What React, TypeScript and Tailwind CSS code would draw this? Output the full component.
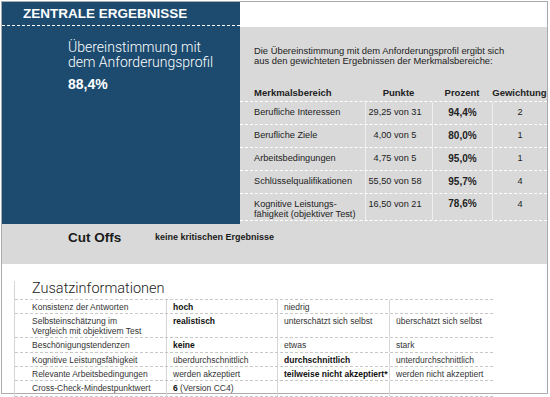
import React from "react";

type ScoreRow = { name: string[]; points: string; percent: string; weight: string };

const scoreRows: ScoreRow[] = [
  { name: ["Berufliche Interessen"], points: "29,25 von 31", percent: "94,4%", weight: "2" },
  { name: ["Berufliche Ziele"], points: "4,00 von 5", percent: "80,0%", weight: "1" },
  { name: ["Arbeitsbedingungen"], points: "4,75 von 5", percent: "95,0%", weight: "1" },
  { name: ["Schlüsselqualifikationen"], points: "55,50 von 58", percent: "95,7%", weight: "4" },
  {
    name: ["Kognitive Leistungs-", "fähigkeit (objektiver Test)"],
    points: "16,50 von 21",
    percent: "78,6%",
    weight: "4",
  },
];

type Cell = { text: string; bold?: boolean };
type InfoRow = { label: string[]; cells: Cell[][]; h: string };

const infoRows: InfoRow[] = [
  {
    label: ["Konsistenz der Antworten"],
    cells: [[{ text: "hoch", bold: true }], [{ text: "niedrig" }], []],
    h: "h-[14px]",
  },
  {
    label: ["Selbsteinschätzung im", "Vergleich mit objektivem Test"],
    cells: [
      [{ text: "realistisch", bold: true }],
      [{ text: "unterschätzt sich selbst" }],
      [{ text: "überschätzt sich selbst" }],
    ],
    h: "h-[24px]",
  },
  {
    label: ["Beschönigungstendenzen"],
    cells: [[{ text: "keine", bold: true }], [{ text: "etwas" }], [{ text: "stark" }]],
    h: "h-[15px]",
  },
  {
    label: ["Kognitive Leistungsfähigkeit"],
    cells: [
      [{ text: "überdurchschnittlich" }],
      [{ text: "durchschnittlich", bold: true }],
      [{ text: "unterdurchschnittlich" }],
    ],
    h: "h-[14px]",
  },
  {
    label: ["Relevante Arbeitsbedingungen"],
    cells: [
      [{ text: "werden akzeptiert" }],
      [{ text: "teilweise nicht akzeptiert*", bold: true }],
      [{ text: "werden nicht akzeptiert" }],
    ],
    h: "h-[14px]",
  },
  {
    label: ["Cross-Check-Mindestpunktwert"],
    cells: [[{ text: "6", bold: true }, { text: " (Version CC4)" }], [], []],
    h: "h-[16px]",
  },
];

function ScoreTable() {
  return (
    <div className="mt-[14px] text-[#222]">
      <div className="flex h-[22px] border-b border-dashed border-white text-[9.5px] font-bold leading-[11px]">
        <div className="w-[125px] pl-[14px] pt-[7px]">Merkmalsbereich</div>
        <div className="w-[67px] pt-[7px] text-center">Punkte</div>
        <div className="w-[60px] pt-[7px] text-center">Prozent</div>
        <div className="flex-1 pt-[7px] text-center">Gewichtung</div>
      </div>
      {scoreRows.map((r) => (
        <div
          key={r.points + r.percent}
          className={`flex border-b border-dashed border-white text-[9.2px] ${
            r.name.length > 1 ? "h-[27px] leading-[10px]" : "h-[23px] leading-[11px]"
          }`}
        >
          <div className="w-[125px] pl-[14px] pt-[5px]">
            {r.name.map((n) => (
              <div key={n}>{n}</div>
            ))}
          </div>
          <div className="w-[67px] border-l border-[#efefef] pt-[5px] pr-[8px] text-center">{r.points}</div>
          <div className="w-[60px] border-l border-[#efefef] pt-[5px] text-center text-[10px] font-bold">
            {r.percent}
          </div>
          <div className="flex-1 border-l border-[#efefef] pt-[5px] text-center">{r.weight}</div>
        </div>
      ))}
    </div>
  );
}

function InfoTable() {
  return (
    <div className="ml-[12px] w-[479px] border-l border-[#d6d6d6] text-[8.5px] leading-[10px] text-[#333]">
      <div className="h-[19px] border-b border-dashed border-[#c8c8c8] pl-[17px] font-['Roboto',Arial,sans-serif] text-[14.5px] font-light leading-[16px] text-[#222]">
        Zusatzinformationen
      </div>
      {infoRows.map((r) => (
        <div key={r.label[0]} className={`flex shrink-0 ${r.h} border-b border-dashed border-[#c8c8c8]`}>
          <div className="w-[151px] pl-[17px] pt-[2px]">
            {r.label.map((l) => (
              <div key={l}>{l}</div>
            ))}
          </div>
          {r.cells.map((c, i) => (
            <div
              key={i}
              className={`border-l border-[#d6d6d6] pl-[6px] pt-[2px] ${
                i === 0 ? "w-[111px]" : i === 1 ? "w-[112px]" : "flex-1"
              }`}
            >
              {c.map((part) => (
                <span key={part.text} className={part.bold ? "font-bold text-[#111]" : ""}>
                  {part.text}
                </span>
              ))}
            </div>
          ))}
        </div>
      ))}
    </div>
  );
}

export default function App() {
  return (
    <div className="h-[397px] w-[550px] overflow-hidden bg-white pl-px pt-px font-['Liberation_Sans',Arial,sans-serif]">
      <div className="flex h-[393px] w-[547px] flex-col border border-[#ababab]">
        <div className="flex h-[222px] shrink-0">
          {/* blue summary panel */}
          <div className="flex w-[238px] flex-col bg-[#1c4b6f] text-white">
            <div className="flex h-[24px] items-center border-b border-dashed border-white pl-[21px] text-[13.5px] font-bold leading-[15px]">
              ZENTRALE ERGEBNISSE
            </div>
            <div className="pl-[66px] pt-[14px]">
              <div className="font-['Roboto',Arial,sans-serif] text-[14px] font-light leading-[15px]">
                <div>Übereinstimmung mit</div>
                <div>dem Anforderungsprofil</div>
              </div>
              <div className="mt-[7px] text-[14px] font-bold leading-[15px]">88,4%</div>
            </div>
          </div>
          {/* weighting details */}
          <div className="flex flex-1 flex-col">
            <div className="h-[25px] bg-white" />
            <div className="flex-1 bg-[#d9d9d9]">
              <p className="pl-[14px] pt-[19px] text-[9.4px] leading-[10px] text-[#222]">
                Die Übereinstimmung mit dem Anforderungsprofil ergibt sich
                <br />
                aus den gewichteten Ergebnissen der Merkmalsbereiche:
              </p>
              <ScoreTable />
            </div>
          </div>
        </div>
        {/* cut offs */}
        <div className="h-[40px] shrink-0 bg-[#d9d9d9] pt-[6px]">
          <div className="flex h-[15px] items-center text-[#1a1a1a]">
            <div className="w-[153px] pl-[66px] text-[13.5px] font-bold leading-[15px]">Cut Offs</div>
            <div className="text-[9px] font-bold leading-[11px]">keine kritischen Ergebnisse</div>
          </div>
        </div>
        {/* additional info */}
        <div className="min-h-0 flex-1 pt-[17px]">
          <InfoTable />
        </div>
      </div>
    </div>
  );
}
